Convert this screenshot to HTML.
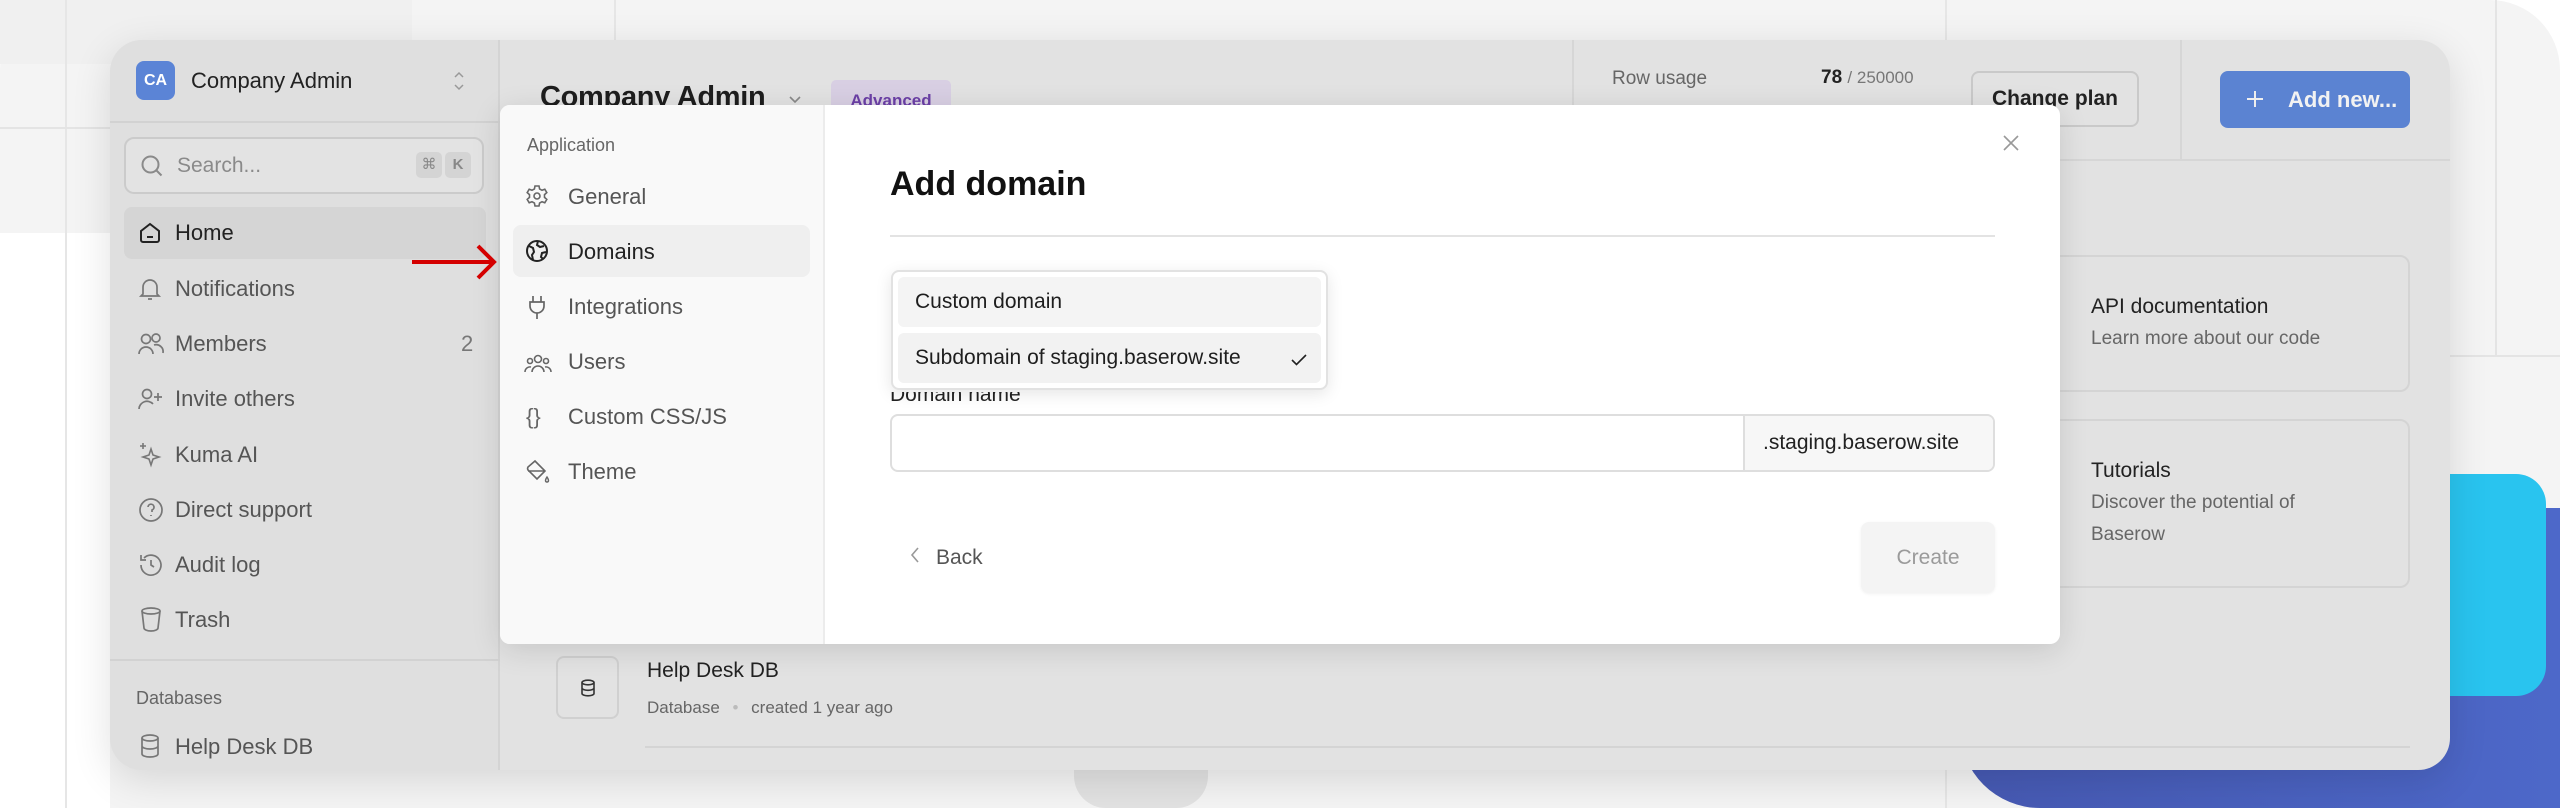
<!DOCTYPE html>
<html><head><meta charset="utf-8"><style>
*{box-sizing:border-box;margin:0;padding:0}
body{width:2560px;height:808px;position:relative;overflow:hidden;background:#fff;font-family:"Liberation Sans",sans-serif;color:#222}
.abs{position:absolute}
.t{position:absolute;white-space:nowrap;line-height:1}
svg{position:absolute;overflow:visible}
</style></head><body>
<div class="abs" style="left:0;top:0;width:2560px;height:808px;background:#f4f4f4;border-radius:70px 70px 0 0"></div>
<div class="abs" style="left:0;top:0;width:412px;height:64px;background:#f0f0f0"></div>
<div class="abs" style="left:0;top:233px;width:110px;height:575px;background:#fff"></div>
<div class="abs" style="left:65px;top:0;width:2px;height:808px;background:#e6e6e6"></div>
<div class="abs" style="left:614px;top:0;width:2px;height:64px;background:#e6e6e6"></div>
<div class="abs" style="left:0;top:127px;width:110px;height:2px;background:#e4e4e4"></div>
<div class="abs" style="left:1945px;top:0;width:2px;height:808px;background:#e6e6e6"></div>
<div class="abs" style="left:2495px;top:0;width:2px;height:356px;background:#e4e4e4"></div>
<div class="abs" style="left:2449px;top:355px;width:111px;height:2px;background:#e4e4e4"></div>
<div class="abs" style="left:1960px;top:508px;width:600px;height:300px;background:linear-gradient(90deg,#4659b2,#4d68c9);border-radius:0 0 0 80px"></div>
<div class="abs" style="left:2380px;top:474px;width:166px;height:222px;background:#29c4ef;border-radius:0 30px 30px 0"></div>
<div class="abs" style="left:1074px;top:740px;width:134px;height:68px;background:#e2e2e2;border-radius:0 0 32px 32px"></div>

<div class="abs" style="left:110px;top:40px;width:2340px;height:730px;background:#e2e2e2;border-radius:32px;overflow:hidden;box-shadow:0 10px 40px rgba(0,0,0,.12)">
  <div class="abs" style="left:0;top:0;width:390px;height:730px;background:#dfdfdf;border-right:2px solid #d4d4d4"></div>
  <div class="abs" style="left:0;top:81px;width:390px;height:2px;background:#d2d2d2"></div>
  <div class="abs" style="left:26px;top:21px;width:39px;height:39px;background:#5b84d6;border-radius:8px;color:#fff;font-weight:bold;font-size:16px;text-align:center;line-height:39px">CA</div>
  <div class="t" style="left:81px;top:30px;font-size:22px;color:#222">Company Admin</div>
  <svg style="left:343px;top:30px" width="12" height="22" viewBox="0 0 12 22"><path d="M2 7l4-4 4 4M2 15l4 4 4-4" fill="none" stroke="#999" stroke-width="1.5"/></svg>
  <div class="abs" style="left:14px;top:97px;width:360px;height:57px;border:2px solid #cbcbcb;border-radius:10px;background:#e3e3e3"></div>
  <svg style="left:30px;top:114px" width="24" height="24" viewBox="0 0 24 24"><circle cx="10.5" cy="10.5" r="8" fill="none" stroke="#8a8a8a" stroke-width="2"/><path d="M16.5 16.5l5 5" stroke="#8a8a8a" stroke-width="2"/></svg>
  <div class="t" style="left:67px;top:115px;font-size:21px;color:#8a8a8a">Search...</div>
  <div class="abs" style="left:306px;top:112px;width:26px;height:26px;background:#d4d4d4;border-radius:5px;color:#888;font-size:15px;text-align:center;line-height:26px">⌘</div>
  <div class="abs" style="left:335px;top:112px;width:26px;height:26px;background:#d4d4d4;border-radius:5px;color:#888;font-size:15px;font-weight:bold;text-align:center;line-height:26px">K</div>
  <div class="abs" style="left:14px;top:167px;width:362px;height:52px;background:#d5d5d5;border-radius:8px"></div>
  <svg style="left:28px;top:181px" width="24" height="24" viewBox="0 0 24 24"><path d="M3 10l9-7 9 7v9a2 2 0 0 1-2 2H5a2 2 0 0 1-2-2z" fill="none" stroke="#222" stroke-width="2"/><path d="M9 16h6" stroke="#222" stroke-width="2"/></svg>
  <div class="t" style="left:65px;top:182px;font-size:22px;color:#222">Home</div>
  <div class="t" style="left:65px;top:238px;font-size:22px;color:#555">Notifications</div>
  <svg style="left:28px;top:236px" width="24" height="26" viewBox="0 0 24 26"><path d="M5 18V11a7 7 0 0 1 14 0v7l2 2H3z M10 23h4" fill="none" stroke="#777" stroke-width="1.7"/></svg>
  <div class="t" style="left:65px;top:293px;font-size:22px;color:#555">Members</div>
  <div class="t" style="left:351px;top:293px;font-size:22px;color:#777">2</div>
  <svg style="left:27px;top:292px" width="28" height="24" viewBox="0 0 28 24"><circle cx="9" cy="7" r="4.5" fill="none" stroke="#777" stroke-width="1.7"/><circle cx="19" cy="6" r="4" fill="none" stroke="#777" stroke-width="1.7"/><path d="M2 22a7 7 0 0 1 14 0M17 13a7 7 0 0 1 9 8" fill="none" stroke="#777" stroke-width="1.7"/></svg>
  <div class="t" style="left:65px;top:348px;font-size:22px;color:#555">Invite others</div>
  <svg style="left:27px;top:347px" width="28" height="24" viewBox="0 0 28 24"><circle cx="10" cy="7" r="4.5" fill="none" stroke="#777" stroke-width="1.7"/><path d="M2 22a8 8 0 0 1 14-5M21 6v8M17 10h8" fill="none" stroke="#777" stroke-width="1.7"/></svg>
  <div class="t" style="left:65px;top:404px;font-size:22px;color:#555">Kuma AI</div>
  <svg style="left:27px;top:401px" width="28" height="28" viewBox="0 0 28 28"><path d="M14 8l2 6 6 2-6 2-2 6-2-6-6-2 6-2z M6 2v6M3 5h6" fill="none" stroke="#777" stroke-width="1.6"/></svg>
  <div class="t" style="left:65px;top:459px;font-size:22px;color:#555">Direct support</div>
  <svg style="left:28px;top:457px" width="26" height="26" viewBox="0 0 26 26"><circle cx="13" cy="13" r="11" fill="none" stroke="#777" stroke-width="1.7"/><path d="M10 10a3 3 0 1 1 4 3v2M13 18v1" fill="none" stroke="#777" stroke-width="1.7"/></svg>
  <div class="t" style="left:65px;top:514px;font-size:22px;color:#555">Audit log</div>
  <svg style="left:28px;top:512px" width="26" height="26" viewBox="0 0 26 26"><path d="M3 13a10 10 0 1 0 3-7M3 3v5h5M13 8v5l3 2" fill="none" stroke="#777" stroke-width="1.7"/></svg>
  <div class="t" style="left:65px;top:569px;font-size:22px;color:#555">Trash</div>
  <svg style="left:30px;top:566px" width="22" height="26" viewBox="0 0 22 26"><ellipse cx="11" cy="5" rx="9" ry="3" fill="none" stroke="#777" stroke-width="1.7"/><path d="M2 5l2 17a7 3 0 0 0 14 0L20 5" fill="none" stroke="#777" stroke-width="1.7"/></svg>
  <div class="abs" style="left:0;top:619px;width:390px;height:2px;background:#d2d2d2"></div>
  <div class="t" style="left:26px;top:649px;font-size:18px;color:#666">Databases</div>
  <div class="t" style="left:65px;top:696px;font-size:22px;color:#555">Help Desk DB</div>
  <svg style="left:30px;top:693px" width="20" height="26" viewBox="0 0 20 26"><ellipse cx="10" cy="5" rx="8" ry="3" fill="none" stroke="#777" stroke-width="1.7"/><path d="M2 5v16a8 3 0 0 0 16 0V5M2 13a8 3 0 0 0 16 0" fill="none" stroke="#777" stroke-width="1.7"/></svg>

  <div class="t" style="left:430px;top:43px;font-size:29px;font-weight:bold;color:#1e1e1e;letter-spacing:-0.3px">Company Admin</div>
  <svg style="left:678px;top:55px" width="14" height="10" viewBox="0 0 14 10"><path d="M2 2l5 5 5-5" fill="none" stroke="#888" stroke-width="1.6"/></svg>
  <div class="abs" style="left:721px;top:40px;width:120px;height:34px;background:#d8cfe3;border-radius:5px;color:#6b3fa6;font-size:17px;font-weight:bold;text-align:center;line-height:42px">Advanced</div>
  <div class="abs" style="left:390px;top:119px;width:1950px;height:2px;background:#d6d6d6"></div>
  <div class="abs" style="left:1462px;top:0;width:2px;height:120px;background:#d6d6d6"></div>
  <div class="abs" style="left:2070px;top:0;width:2px;height:120px;background:#d6d6d6"></div>
  <div class="t" style="left:1502px;top:29px;font-size:19px;color:#666">Row usage</div>
  <div class="t" style="left:1711px;top:28px;font-size:19px;color:#222;font-weight:bold">78 <span style="font-weight:normal;color:#777;font-size:17px">/ 250000</span></div>
  <div class="abs" style="left:1861px;top:31px;width:168px;height:56px;border:2px solid #c9c9c9;border-radius:8px;background:#e2e2e2;font-size:21px;font-weight:bold;color:#222;text-align:center;line-height:52px">Change plan</div>
  <div class="abs" style="left:2110px;top:31px;width:190px;height:57px;border-radius:8px;background:#5b83d2;color:#f2f2f2;font-size:22px;font-weight:bold;line-height:57px;padding-left:68px">Add new...</div>
  <svg style="left:2136px;top:50px" width="18" height="18" viewBox="0 0 18 18"><path d="M9 1v16M1 9h16" stroke="#eee" stroke-width="2"/></svg>
  <div class="abs" style="left:1900px;top:215px;width:400px;height:137px;border:2px solid #d4d4d4;border-radius:10px"></div>
  <div class="t" style="left:1981px;top:256px;font-size:21px;color:#222">API documentation</div>
  <div class="t" style="left:1981px;top:289px;font-size:19px;color:#666">Learn more about our code</div>
  <div class="abs" style="left:1900px;top:379px;width:400px;height:169px;border:2px solid #d4d4d4;border-radius:10px"></div>
  <div class="t" style="left:1981px;top:420px;font-size:21px;color:#222">Tutorials</div>
  <div class="t" style="left:1981px;top:453px;font-size:19px;color:#666">Discover the potential of</div>
  <div class="t" style="left:1981px;top:485px;font-size:19px;color:#666">Baserow</div>
  <div class="abs" style="left:446px;top:616px;width:63px;height:63px;border:2px solid #d0d0d0;border-radius:8px"></div>
  <svg style="left:470px;top:639px" width="16" height="18" viewBox="0 0 16 18"><ellipse cx="8" cy="3.5" rx="6" ry="2.3" fill="none" stroke="#333" stroke-width="1.6"/><path d="M2 3.5v11a6 2.3 0 0 0 12 0v-11M2 9a6 2.3 0 0 0 12 0" fill="none" stroke="#333" stroke-width="1.6"/></svg>
  <div class="t" style="left:537px;top:620px;font-size:21px;color:#222">Help Desk DB</div>
  <div class="t" style="left:537px;top:659px;font-size:17px;color:#666">Database <span style="color:#bbb;margin:0 8px">•</span> created 1 year ago</div>
  <div class="abs" style="left:535px;top:706px;width:1765px;height:2px;background:#d4d4d4"></div>
</div>

<div class="abs" style="left:500px;top:105px;width:1560px;height:539px;background:#fff;border-radius:10px;overflow:hidden;box-shadow:0 6px 30px rgba(0,0,0,.12)">
  <div class="abs" style="left:0;top:0;width:325px;height:539px;background:#f9f9f9;border-right:2px solid #ececec"></div>
  <div class="t" style="left:27px;top:31px;font-size:18px;color:#666">Application</div>
  <svg style="left:25px;top:79px" width="24" height="24" viewBox="0 0 24 24"><circle cx="12" cy="12" r="3" fill="none" stroke="#666" stroke-width="1.6"/><path d="M10 2h4l.6 3 2.4 1.3 2.8-1.1 2 3.4-2.3 2v2.8l2.3 2-2 3.4-2.8-1.1L14.6 19 14 22h-4l-.6-3-2.4-1.3-2.8 1.1-2-3.4 2.3-2v-2.8l-2.3-2 2-3.4 2.8 1.1L9.4 5z" fill="none" stroke="#666" stroke-width="1.6"/></svg>
  <div class="t" style="left:68px;top:81px;font-size:22px;color:#555">General</div>
  <div class="abs" style="left:13px;top:120px;width:297px;height:52px;background:#efefef;border-radius:8px"></div>
  <svg style="left:25px;top:134px" width="24" height="24" viewBox="0 0 24 24"><circle cx="12" cy="12" r="10" fill="none" stroke="#222" stroke-width="2"/><path d="M4 7l4 2 1 4-2 3 1 5M13 2l-1 4 3 2 4-1M21 13l-4 1-1 4 2 2" fill="none" stroke="#222" stroke-width="2"/></svg>
  <div class="t" style="left:68px;top:136px;font-size:22px;color:#222">Domains</div>
  <svg style="left:27px;top:189px" width="20" height="26" viewBox="0 0 20 26"><path d="M6 2v6M14 2v6M3 8h14v4a7 7 0 0 1-14 0zM10 19v6" fill="none" stroke="#666" stroke-width="1.7"/></svg>
  <div class="t" style="left:68px;top:191px;font-size:22px;color:#555">Integrations</div>
  <svg style="left:24px;top:248px" width="28" height="20" viewBox="0 0 28 20"><circle cx="14" cy="6" r="3.5" fill="none" stroke="#666" stroke-width="1.6"/><circle cx="6" cy="8" r="2.5" fill="none" stroke="#666" stroke-width="1.6"/><circle cx="22" cy="8" r="2.5" fill="none" stroke="#666" stroke-width="1.6"/><path d="M8 19a6 6 0 0 1 12 0M1 19a5 5 0 0 1 6-5M27 19a5 5 0 0 0-6-5" fill="none" stroke="#666" stroke-width="1.6"/></svg>
  <div class="t" style="left:68px;top:246px;font-size:22px;color:#555">Users</div>
  <div class="t" style="left:26px;top:301px;font-size:22px;color:#666">{}</div>
  <div class="t" style="left:68px;top:301px;font-size:22px;color:#555">Custom CSS/JS</div>
  <svg style="left:25px;top:354px" width="26" height="26" viewBox="0 0 26 26"><path d="M10 2l10 10-8 8-9-9a3 3 0 0 1 0-3zM3 12h16" fill="none" stroke="#666" stroke-width="1.6"/><path d="M22 18c-2 3-2 5 0 5s2-2 0-5z" fill="none" stroke="#666" stroke-width="1.4"/></svg>
  <div class="t" style="left:68px;top:356px;font-size:22px;color:#555">Theme</div>
  <div class="t" style="left:390px;top:62px;font-size:34px;font-weight:bold;color:#111">Add domain</div>
  <svg style="left:1502px;top:29px" width="18" height="18" viewBox="0 0 18 18"><path d="M2 2l14 14M16 2L2 16" stroke="#999" stroke-width="1.6"/></svg>
  <div class="abs" style="left:390px;top:130px;width:1105px;height:2px;background:#e3e3e3"></div>
  <div class="t" style="left:390px;top:279px;font-size:21px;color:#222;clip-path:inset(8px 0 0 0)">Domain name</div>
  <div class="abs" style="left:390px;top:309px;width:1105px;height:58px;border:2px solid #dedede;border-radius:8px;overflow:hidden">
    <div class="abs" style="left:851px;top:0;width:254px;height:58px;background:#f7f7f7;border-left:2px solid #dedede;font-size:21px;color:#222;line-height:54px;padding-left:18px">.staging.baserow.site</div>
  </div>
  <svg style="left:410px;top:441px" width="10" height="18" viewBox="0 0 10 18"><path d="M8 2L2 9l6 7" fill="none" stroke="#999" stroke-width="1.6"/></svg>
  <div class="t" style="left:436px;top:442px;font-size:21px;color:#555">Back</div>
  <div class="abs" style="left:1361px;top:417px;width:134px;height:71px;background:#f4f4f4;border-radius:8px;box-shadow:0 1px 3px rgba(0,0,0,.06);color:#9a9a9a;font-size:21px;text-align:center;line-height:71px">Create</div>
  <div class="abs" style="left:391px;top:165px;width:437px;height:120px;background:#fff;border:2px solid #e2e2e2;border-radius:8px;box-shadow:0 4px 16px rgba(0,0,0,.1)">
    <div class="abs" style="left:5px;top:5px;width:423px;height:50px;background:#f4f4f4;border-radius:6px"></div>
    <div class="abs" style="left:5px;top:61px;width:423px;height:50px;background:#f2f2f2;border-radius:6px"></div>
    <div class="t" style="left:22px;top:19px;font-size:21px;color:#1e1e1e">Custom domain</div>
    <div class="t" style="left:22px;top:75px;font-size:21px;color:#1e1e1e">Subdomain of staging.baserow.site</div>
    <svg style="left:398px;top:82px" width="16" height="12" viewBox="0 0 16 12"><path d="M1 6l4.5 4.5L15 1" fill="none" stroke="#222" stroke-width="1.6"/></svg>
  </div>
</div>
<svg style="left:410px;top:243px" width="90" height="40" viewBox="0 0 90 40"><path d="M2 19h82M68 3l16 16-16 16" fill="none" stroke="#d40000" stroke-width="4"/></svg>
</body></html>
